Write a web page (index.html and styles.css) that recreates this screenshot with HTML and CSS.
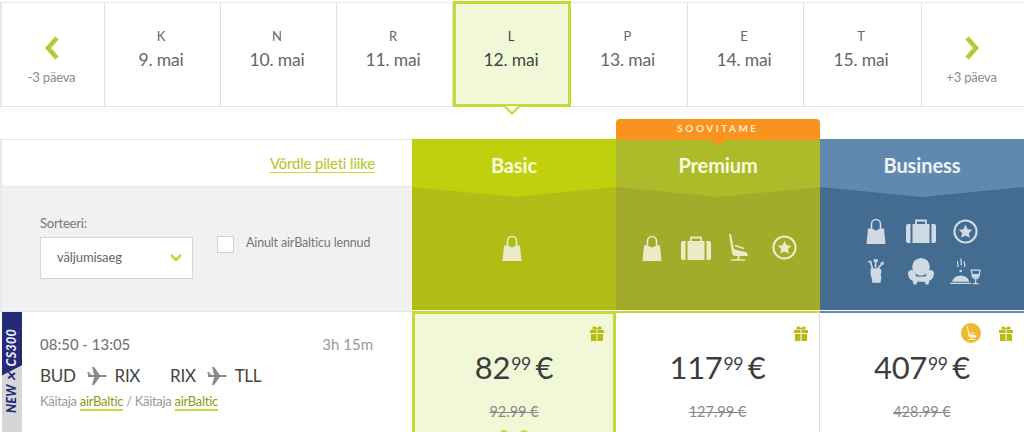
FILE: index.html
```html
<!DOCTYPE html>
<html lang="et">
<head>
    <meta charset="UTF-8">
    <title>airBaltic lennud</title>
    <link rel="stylesheet" href="styles.css">
</head>
<body>
    <svg class="defs" width="0" height="0">
        <symbol id="i-bag" viewBox="0 0 20 26"><path d="M5.500 11V6a4.500 4.500 0 0 1 9 0v5" fill="none" stroke="currentColor" stroke-width="1.600"/><path d="M.5 26L2 10.500h3.500L10 12.500l4.500-2H18L19.500 26z" fill="currentColor"/></symbol>
        <symbol id="i-case" viewBox="0 0 30 24"><path d="M10 5V1.500h10V5" fill="none" stroke="currentColor" stroke-width="1.800"/><path d="M0 7a2 2 0 0 1 2-2h2.500v19H2a2 2 0 0 1-2-2zM6.500 5h17v19h-17zM25.500 5H28a2 2 0 0 1 2 2v15a2 2 0 0 1-2 2h-2.500z" fill="currentColor"/></symbol>
        <symbol id="i-seat" viewBox="0 0 20 27"><path d="M1 0h2l2.500 13c.4 1.800 1.200 2.500 3 3l9 2c1.500.4 2 1.200 2 2.500V22H8c-2.500 0-3.500-1-4-3z" fill="currentColor"/><path d="M7 11.500l9 3M11 22l-1 3.500M3 26h14" fill="none" stroke="currentColor" stroke-width="1.700"/></symbol>
        <symbol id="i-star" viewBox="0 0 26 26"><circle cx="13" cy="13" r="11.500" fill="none" stroke="currentColor" stroke-width="2.200"/><path d="M13 6l2.200 4.600 5 .6-3.700 3.400 1 5L13 17.200 8.500 19.600l1-5-3.700-3.400 5-.6z" fill="currentColor"/></symbol>
        <symbol id="i-golf" viewBox="0 0 20 26"><path d="M6 10L4 3M9.500 9V2M12 10l5-5" fill="none" stroke="currentColor" stroke-width="1.800"/><path d="M0 3l4-2 1.500 3zM7 0h5v3H8zM14 4l5-1.500-1 4z" fill="currentColor"/><path d="M4 10h10c1 0 2 2 2 4s-1 2-1 3 1 1 1 3l-1 6H6l-1-6-1-3z" fill="currentColor"/></symbol>
        <symbol id="i-chair" viewBox="0 0 28 29"><circle cx="14" cy="10" r="9.500" fill="currentColor"/><path d="M0 17a4 4 0 0 1 7.500-1.500c.8 1.800.8 4 1.500 5h10c.7-1 .7-3.200 1.500-5A4 4 0 0 1 28 17c0 4-2 7-5 8l-1 4h-3l-1-3h-8l-1 3H6l-1-4c-3-1-5-4-5-8z" fill="currentColor"/></symbol>
        <symbol id="i-meal" viewBox="0 0 32 27"><path d="M0 25h22v1.500H0zM2 24a9.500 9.500 0 0 1 18 0z" fill="currentColor"/><circle cx="11" cy="13" r="1.300" fill="currentColor"/><path d="M8 3c-1 2 1 3 0 6M11.500 0c-1 2 1 4 0 7M15 3c-1 2 1 3 0 6M22 12h9l-1 6c-.5 2-2 3-3.500 3S23.500 20 23 18zM26.500 21v5M23.500 26h6" fill="none" stroke="currentColor" stroke-width="1.300"/><path d="M23 16h7l-.6 3-2.900 1.500-2.900-1.500z" fill="currentColor"/></symbol>
        <symbol id="i-gift" viewBox="0 0 14 15"><path d="M0 4h6.500v3H0zM7.500 4H14v3H7.500zM1 8h5.500v7H1zM7.500 8H13v7H7.500z" fill="currentColor"/><path d="M2.500 3.500C1.500 0 5.500-.5 7 2.500 8.500-.5 12.500 0 11.500 3.500z" fill="currentColor"/></symbol>
        <symbol id="i-plane" viewBox="0 0 22 20"><path d="M1 8.800h19.500c1.700 0 1.700 2.400 0 2.400H1z" fill="currentColor"/><path d="M8 9L5.500 0h2.300L14 9zM8 11l-2.500 9h2.300L14 11zM0 5.500h1.800L4.500 9H1.500z" fill="currentColor"/></symbol>
    </svg>

    <nav class="dates">
        <a class="day day-nav">
            <svg class="nav-arrow" viewBox="0 0 16 24"><path d="M13 2L4 12l9 10" /></svg>
            <span class="nav-label">-3 päeva</span>
        </a>
        <a class="day"><span class="dow">K</span><span class="date">9. mai</span></a>
        <a class="day"><span class="dow">N</span><span class="date">10. mai</span></a>
        <a class="day"><span class="dow">R</span><span class="date">11. mai</span></a>
        <a class="day day-active"><span class="dow">L</span><span class="date">12. mai</span></a>
        <a class="day"><span class="dow">P</span><span class="date">13. mai</span></a>
        <a class="day"><span class="dow">E</span><span class="date">14. mai</span></a>
        <a class="day"><span class="dow">T</span><span class="date">15. mai</span></a>
        <a class="day day-nav">
            <svg class="nav-arrow" viewBox="0 0 16 24"><path d="M3 2l9 10-9 10" /></svg>
            <span class="nav-label">+3 päeva</span>
        </a>
    </nav>

    <section class="fares">
        <div class="side">
            <div class="side-top"><a class="compare">Võrdle pileti liike</a></div>
            <div class="side-filters">
                <div class="sort">
                    <label class="sort-label">Sorteeri:</label>
                    <div class="select">
                        <span>väljumisaeg</span>
                        <svg class="select-arrow" viewBox="0 0 12 8"><path d="M1 1l5 5 5-5" /></svg>
                    </div>
                </div>
                <div class="only">
                    <span class="checkbox"></span>
                    <span class="only-label">Ainult airBalticu lennud</span>
                </div>
            </div>
        </div>

        <div class="plan plan-basic">
            <h2 class="plan-name">Basic</h2>
            <div class="plan-icons">
                <svg class="ic ic-bag"><use href="#i-bag"/></svg>
            </div>
        </div>
        <div class="plan plan-premium">
            <div class="tab">SOOVITAME</div>
            <h2 class="plan-name">Premium</h2>
            <div class="plan-icons">
                <svg class="ic ic-bag"><use href="#i-bag"/></svg>
                <svg class="ic ic-case"><use href="#i-case"/></svg>
                <svg class="ic ic-seat"><use href="#i-seat"/></svg>
                <svg class="ic ic-star"><use href="#i-star"/></svg>
            </div>
        </div>
        <div class="plan plan-business">
            <h2 class="plan-name">Business</h2>
            <div class="plan-icons plan-icons-grid">
                <svg class="ic ic-bag"><use href="#i-bag"/></svg>
                <svg class="ic ic-case"><use href="#i-case"/></svg>
                <svg class="ic ic-star"><use href="#i-star"/></svg>
                <svg class="ic ic-golf"><use href="#i-golf"/></svg>
                <svg class="ic ic-chair"><use href="#i-chair"/></svg>
                <svg class="ic ic-meal"><use href="#i-meal"/></svg>
            </div>
        </div>

        <div class="flight">
            <div class="badge"><span class="badge-text"><b>NEW</b> ✕ <i>CS300</i></span></div>
            <div class="flight-info">
                <div class="times"><span>08:50 - 13:05</span><span class="duration">3h 15m</span></div>
                <div class="route">
                    <span>BUD</span><svg class="plane"><use href="#i-plane"/></svg><span>RIX</span>
                    <span class="leg2">RIX</span><svg class="plane"><use href="#i-plane"/></svg><span>TLL</span>
                </div>
                <div class="operator">Käitaja <a>airBaltic</a> / Käitaja <a>airBaltic</a></div>
            </div>
        </div>

        <div class="price price-active">
            <div class="perks"><svg class="gift"><use href="#i-gift"/></svg></div>
            <div class="amount">82<sup>99</sup> €</div>
            <div class="old">92.99 €</div>
            <div class="dots"><span></span><span></span></div>
        </div>
        <div class="price">
            <div class="perks"><svg class="gift"><use href="#i-gift"/></svg></div>
            <div class="amount">117<sup>99</sup> €</div>
            <div class="old">127.99 €</div>
        </div>
        <div class="price price-last">
            <div class="perks">
                <span class="seat-badge"><svg viewBox="0 0 20 27"><use href="#i-seat"/></svg></span>
                <svg class="gift"><use href="#i-gift"/></svg>
            </div>
            <div class="amount">407<sup>99</sup> €</div>
            <div class="old">428.99 €</div>
        </div>
    </section>
</body>
</html>
```

FILE: styles.css
```css
* {
    box-sizing: border-box;
    margin: 0;
    padding: 0;
}

html, body {
    height: 432px;
    overflow: hidden;
}

body {
    background: #fff;
    font-family: "Lato", "Open Sans", sans-serif;
    color: #666;
    padding-top: 2px;
}

.defs {
    position: absolute;
}

/* date strip */
.dates {
    display: grid;
    grid-template-columns: 103px 116px 116px 116px 118px 117px 116px 118px 1fr;
    height: 105px;
    border-top: 1px solid #e9e9e9;
    border-bottom: 1px solid #e3e3e3;
    border-left: 2px solid #e9e9e9;
}

.day {
    display: flex;
    flex-direction: column;
    align-items: center;
    padding: 26px 3px 0 0;
    border-right: 1px solid #e3e3e3;
    position: relative;
}

.day:last-child {
    border-right: 0;
}

.dow {
    font-size: 13px;
    line-height: 14px;
    color: #666;
}

.date {
    font-size: 17.500px;
    line-height: 20px;
    margin-top: 7px;
    color: #666;
    letter-spacing: -0.2px;
}

.day-nav {
    padding-top: 33px;
}

.nav-arrow {
    width: 16px;
    height: 24px;
    fill: none;
    stroke: #b5cb2b;
    stroke-width: 4.500;
}

.nav-label {
    font-size: 13px;
    line-height: 14px;
    margin-top: 10px;
    color: #8a8a8a;
    letter-spacing: -0.2px;
}

.day-active {
    background: #f1f8d8;
    border: 3px solid #c6d934;
    margin: -2px 0 -1px 0;
    padding: 25px 2px 0 0;
    z-index: 1;
}

.day-active .date,
.day-active .dow {
    color: #444;
}

.day-active::after {
    content: "";
    position: absolute;
    left: 50%;
    bottom: -11px;
    margin-left: -8px;
    width: 0;
    height: 0;
    border-left: 8px solid transparent;
    border-right: 8px solid transparent;
    border-top: 8px solid #c6d934;
}

.day-active::before {
    content: "";
    position: absolute;
    left: 50%;
    bottom: -8px;
    margin-left: -6px;
    width: 0;
    height: 0;
    border-left: 6px solid transparent;
    border-right: 6px solid transparent;
    border-top: 6px solid #fff;
    z-index: 1;
}

/* fares table */
.fares {
    display: grid;
    grid-template-columns: 412px 204px 204px 204px;
    grid-template-rows: 172px 1fr;
    margin-top: 32px;
}

.side {
    display: flex;
    flex-direction: column;
    border-left: 2px solid #e9e9e9;
    border-top: 1px solid #e6e6e6;
}

.side-top {
    height: 47px;
    display: flex;
    justify-content: flex-end;
    align-items: center;
    padding-right: 37px;
    border-bottom: 1px solid #e6e6e6;
}

.compare {
    font-size: 14.800px;
    line-height: 18px;
    color: #b5c421;
    border-bottom: 1px solid #c6d934;
    letter-spacing: -0.1px;
}

.side-filters {
    flex: 1;
    background: #f1f1f1;
    display: flex;
    padding: 27px 0 0 38px;
    gap: 24px;
}

.sort-label {
    display: block;
    font-size: 13px;
    line-height: 18px;
    color: #777;
    margin-bottom: 5px;
    letter-spacing: -0.2px;
}

.select {
    width: 153px;
    height: 42px;
    background: #fff;
    border: 1px solid #d5d5d5;
    display: flex;
    justify-content: space-between;
    align-items: center;
    padding: 0 10px 3px 16px;
    font-size: 13px;
    color: #666;
    letter-spacing: -0.1px;
}

.select-arrow {
    width: 12px;
    height: 8px;
    margin-top: 3px;
    fill: none;
    stroke: #c6d934;
    stroke-width: 2.500;
}

.only {
    display: flex;
    gap: 12px;
    padding-top: 21px;
}

.checkbox {
    width: 17px;
    height: 17px;
    margin-top: 1px;
    background: #fff;
    border: 1px solid #d0d0d0;
}

.only-label {
    font-size: 12.500px;
    line-height: 15px;
    color: #777;
    letter-spacing: -0.15px;
}

/* plan columns */
.plan {
    position: relative;
    display: flex;
    flex-direction: column;
    color: #f6fbdc;
    margin-bottom: 1px;
}

.plan-name {
    height: 48px;
    font-size: 20px;
    font-weight: 700;
    line-height: 52px;
    text-align: center;
    letter-spacing: -0.1px;
}

.plan-icons {
    flex: 1;
    display: flex;
    justify-content: center;
    align-items: center;
    padding-bottom: 2px;
    clip-path: polygon(0 0, 50% 10px, 100% 0, 100% 100%, 0 100%);
}

.plan-basic { background: #c0d00f; }
.plan-basic .plan-icons { background: #b1bc17; }
.plan-premium { background: #adbb2a; }
.plan-premium .plan-icons { background: #a3ab2a; padding-left: 3px; }
.plan-business { background: #6189b0; color: #edf2f6; }
.plan-business .plan-icons { background: #446c90; }

.plan-basic .plan-icons .ic {
    margin-left: -4px;
}

.plan-premium .ic-case { margin-left: 19px; }
.plan-premium .ic-seat { margin-left: 17px; }
.plan-premium .ic-star { margin-left: 24px; }

.plan-basic .ic,
.plan-premium .ic {
    color: #e9ecc6;
}

.plan-business .ic {
    color: #cfdae4;
}

.plan-icons-grid {
    display: grid;
    grid-template-columns: 44px 45px 44px;
    grid-auto-rows: 40px;
    justify-content: center;
    justify-items: center;
    align-content: center;
    align-items: center;
    padding: 5px 3px 0 0;
}

.ic-bag { width: 20px; height: 26px; }
.ic-case { width: 30px; height: 24px; }
.ic-seat { width: 20px; height: 27px; }
.ic-star { width: 25px; height: 25px; }
.ic-golf { width: 18px; height: 24px; }
.ic-chair { width: 26px; height: 28px; }
.ic-meal { width: 31px; height: 27px; }

.tab {
    position: absolute;
    left: 0;
    right: 0;
    top: -20px;
    height: 21px;
    background: #f7931e;
    border-radius: 4px 4px 0 0;
    color: #fbeccf;
    font-size: 10px;
    font-weight: 700;
    line-height: 19px;
    letter-spacing: 2.500px;
    text-align: center;
}

.tab::after {
    content: "";
    position: absolute;
    left: 50%;
    top: 21px;
    margin-left: -7px;
    width: 0;
    height: 0;
    border-left: 7px solid transparent;
    border-right: 7px solid transparent;
    border-top: 6px solid #f7931e;
}

/* flight row */
.flight {
    display: flex;
    border-top: 1px solid #e6e6e6;
}

.badge {
    width: 20px;
    margin: 0 1px 0 2px;
    position: relative;
    overflow: hidden;
    background: linear-gradient(153deg, #252a77 0, #252a77 56px, #d6d6d6 57px, #d6d6d6 100%);
}

.badge-text {
    position: absolute;
    left: 10px;
    top: 59px;
    transform: translate(-50%, -50%) rotate(-90deg);
    white-space: nowrap;
    font-size: 12.500px;
    line-height: 12px;
    font-style: italic;
    font-weight: 900;
    letter-spacing: 0.3px;
    color: #252a77;
}

.badge-text b {
    font-weight: 900;
}

.badge-text i {
    color: #e8e8f2;
    margin-left: 2px;
}

.flight-info {
    flex: 1;
    padding: 22px 39px 0 17px;
}

.times {
    display: flex;
    justify-content: space-between;
    font-size: 15px;
    line-height: 20px;
    color: #777;
    font-weight: 500;
}

.duration {
    color: #999;
    font-weight: 400;
}

.route {
    display: flex;
    align-items: center;
    margin-top: 11px;
    font-size: 17px;
    line-height: 22px;
    color: #444;
    letter-spacing: -0.3px;
}

.plane {
    width: 20px;
    height: 18px;
    margin: 0 8px 0 11px;
    color: #888;
}

.leg2 {
    margin-left: 30px;
}

.operator {
    margin-top: 6px;
    font-size: 13px;
    line-height: 16px;
    color: #999;
    letter-spacing: -0.3px;
}

.operator a {
    color: #8e9a16;
    border-bottom: 2px solid #c6d934;
}

/* price cells */
.price {
    position: relative;
    text-align: center;
    border-top: 2px solid #c6d934;
    border-right: 1px solid #dcdcdc;
    height: 122px;
}

.price-active {
    background: #f1f8d8;
    border: 3px solid #c6d934;
    border-bottom: 0;
}

.price-last {
    border-top-color: #6189b0;
    border-right: 0;
}

.perks {
    height: 36px;
    display: flex;
    justify-content: flex-end;
    align-items: flex-start;
    gap: 18px;
    padding: 13px 11px 0 0;
}

.price-active .perks {
    height: 35px;
    padding: 12px 9px 0 0;
}

.gift {
    width: 14px;
    height: 15px;
    color: #b7bb12;
}

.seat-badge {
    width: 20px;
    height: 20px;
    margin-top: -3px;
    border-radius: 50%;
    background: #edb92e;
    color: #fff5d0;
    display: flex;
    justify-content: center;
    align-items: center;
}

.seat-badge svg {
    width: 11px;
    height: 14px;
}

.amount {
    font-size: 31px;
    line-height: 36px;
    color: #3d3d3d;
    letter-spacing: -0.3px;
    word-spacing: -3px;
}

.amount sup {
    font-size: 17.500px;
    line-height: 0;
    vertical-align: 9px;
    margin-left: 1px;
}

.old {
    margin-top: 18px;
    font-size: 14.500px;
    line-height: 18px;
    color: #8a8a8a;
    text-decoration: line-through;
}

.dots {
    display: flex;
    justify-content: center;
    gap: 12px;
    margin-top: 9px;
}

.dots span {
    width: 8px;
    height: 8px;
    border-radius: 50%;
    background: #c6d934;
}
```
